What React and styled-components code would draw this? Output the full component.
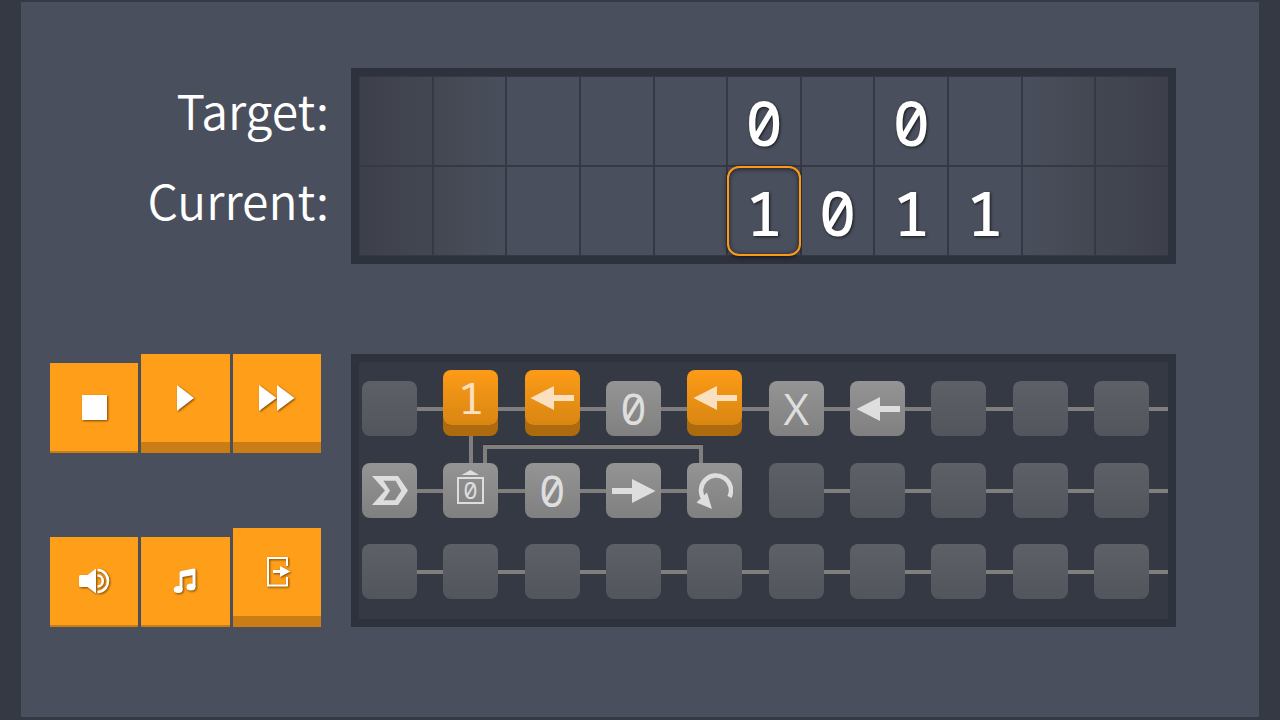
import React from 'react';
import styled, { createGlobalStyle, css } from 'styled-components';

const GlobalStyle = createGlobalStyle`
    * {
        box-sizing: border-box;
    }

    body {
        margin: 0;
        background-color: #353943;
        color: #fff;
    }

    button {
        border: none;
        padding: 0;
        color: inherit;
        cursor: pointer;
    }
`;

const Board = styled.main`
    display: grid;
    grid-template-columns: 301px 1fr;
    grid-template-rows: auto auto;
    align-content: start;
    row-gap: 90px;
    min-height: calc(100vh - 5px);
    margin: 2px 21px 3px;
    padding: 66px 83px 66px 29px;
    background-color: #4a4f5d;
`

const Labels = styled.div`
    display: flex;
    flex-direction: column;
    gap: 2px;
    padding: 9px 22px 9px 0;
`

const Label = styled.div`
    height: 88px;
    font-family: 'Noto Sans CJK JP', 'Noto Sans', sans-serif;
    font-size: 48px;
    font-weight: 350;
    line-height: 65px;
    text-align: right;
`

const Panel = styled.section`
    border: 8px solid #2e323c;
    background-color: #353943;
`

const Tape = styled(Panel)`
    display: flex;
    flex-direction: column;
    gap: 2px;
    padding: 1px 0 1px 1px;
`

const TapeRow = styled.div`
    display: grid;
    grid-template-columns: repeat(11, 1fr);
    gap: 2px;
`

const fades = {
    leftEdge: 'linear-gradient(90deg, #3d404a, #434751)',
    left: 'linear-gradient(90deg, #434751, #4a4f5d)',
    right: 'linear-gradient(90deg, #4a4f5d, #434751)',
    rightEdge: 'linear-gradient(90deg, #434751, #3d404a)'
};

const TapeCell = styled.div`
    position: relative;
    height: 88px;
    background: ${props => fades[props.$fade] || '#4a4f5d'};
    font-family: 'Noto Sans Mono', 'DejaVu Sans Mono', monospace;
    font-size: 62px;
    font-weight: 500;
    line-height: 90px;
    text-align: center;
    text-shadow: 1px 1px 3px rgba(0, 0, 0, 0.7);

    ${props => props.$head && css`
        &::after {
            content: '';
            position: absolute;
            inset: -1px;
            border: 2px solid #fc9a16;
            border-radius: 12px;
            box-shadow: 0 1px 5px rgba(0, 0, 0, 0.6), inset 0 1px 5px rgba(0, 0, 0, 0.6);
        }
    `}
`

const Controls = styled.div`
    display: flex;
    flex-direction: column;
    justify-content: space-between;
    width: 271px;
`

const ButtonRow = styled.div`
    display: grid;
    grid-template-columns: repeat(3, 1fr);
    align-items: end;
    gap: 3px;
`

const ControlButton = styled.button`
    display: flex;
    align-items: center;
    justify-content: center;
    height: ${props => props.$pressed ? '90px' : '99px'};
    border-bottom: ${props => props.$pressed ? '2px' : '11px'} solid #c97d14;
    background-color: #ff9f19;

    svg {
        display: block;
        filter: drop-shadow(1px 1px 1px rgba(90, 50, 0, 0.8));
    }
`

const Program = styled(Panel)`
    padding: 8px 0 20px 3px;
`

const track = css`
    display: grid;
    grid-template-columns: repeat(9, 55px 1fr) 55px 19px;
`

const ProgramRow = styled.div`
    ${track}
    align-items: end;
    margin-top: ${props => props.$spaced ? '26px' : '0'};
`

const Wires = styled.div`
    ${track}
    height: 27px;
`

const Branch = styled.div`
    grid-area: 1 / 3;
    justify-self: center;
    width: 4px;
    background-color: #807f7d;
`

const Loop = styled.div`
    grid-area: 1 / 3 / 2 / 10;
    margin: 9px 39px 0 40px;
    border: 4px solid #807f7d;
    border-bottom: none;
    box-shadow: 0 -1px #2e3038;
`

const Connector = styled.div`
    height: 4px;
    margin-bottom: 25px;
    background-color: ${props => props.$hidden ? 'transparent' : '#807f7d'};
`

const tones = {
    empty: 'linear-gradient(#5d6067, #52555c)',
    grey: 'linear-gradient(#949494, #808080)',
    orange: 'linear-gradient(#fd9b17, #d98612)'
};

const Tile = styled.button`
    display: flex;
    align-items: center;
    justify-content: center;
    height: 55px;
    border-radius: 8px;
    background: ${props => tones[props.$tone]};
    color: #dedede;
    font-family: 'Noto Sans Mono', 'DejaVu Sans Mono', monospace;
    font-size: 44px;
    font-weight: 400;
    line-height: 55px;

    svg {
        display: block;
    }

    ${props => props.$tone === 'orange' && css`
        margin-bottom: 11px;
        box-shadow: 0 11px #ae6b0e;
        color: #fae0c0;
    `}
`

const XMark = styled.span`
    font-family: 'Open Sans', 'Noto Sans', sans-serif;
    font-weight: 400;
`

const StopIcon = () => (
    <svg width="25" height="25" fill="#fff"><path d="M0 0h25v25H0z" /></svg>
);

const PlayIcon = () => (
    <svg width="17" height="26" fill="#fff"><path d="M0 0l17 13L0 26z" /></svg>
);

const ForwardIcon = () => (
    <svg width="36" height="26" fill="#fff"><path d="M0 0l17.500 13L0 26zM18 0l17.500 13-17.500 13z" /></svg>
);

const SoundIcon = () => (
    <svg width="32" height="26" viewBox="-1 0 32 26" fill="none" stroke="#fff" strokeWidth="2.6">
        <path d="M0 8.500q0-1.500 1.500-1.500H8.500L17 .5v25L8.500 19H1.500q-1.500 0-1.500-1.500z" fill="#fff" stroke="none" />
        <path d="M18.500 7.500c7 0 7 11 0 11" />
        <path d="M18.500 2c14 .5 14 21.500 0 22" />
    </svg>
);

const MusicIcon = () => (
    <svg width="24" height="26" viewBox="0 0 24 26" fill="#fff">
        <path d="M6.500 5q0-1.800 1.700-2.100L20.500 .6q2-.2 2 1.400v17h-3V7.200L9.500 9v12.200h-3z" />
        <ellipse cx="5.200" cy="21.500" rx="4.500" ry="3.600" />
        <ellipse cx="18" cy="19" rx="4.500" ry="3.600" />
    </svg>
);

const ExitIcon = () => (
    <svg width="29" height="30" viewBox="-5 0 29 30" fill="none" stroke="#fff" strokeWidth="2">
        <path d="M20 9V1H1v27.500h19v-8.500" />
        <path d="M6 14.500h8" strokeWidth="3" />
        <path d="M13 9l10.500 5.500L13 20z" fill="#fff" stroke="none" />
    </svg>
);

const ArrowIcon = ({ right }) => (
    <svg width="44" height="24" viewBox="0 0 44 24" fill="currentColor">
        <path d={right ? 'M43.500 12L20 0v9H0v6h20v9z' : 'M.5 12L24 0v9h20v6H24v9z'} />
    </svg>
);

const StartIcon = () => (
    <svg width="36" height="29" viewBox="0 0 36 29" fill="currentColor" fillRule="evenodd">
        <path d="M0 0h26l10 14.500L26 29H0l13-14.500zM11.500 4.700l6.500 10-6.500 9.600h11.500l6.300-9.600-5.600-10z" />
    </svg>
);

const ConditionTile = () => (
    <svg width="27" height="41" viewBox="0 0 27 41" fill="currentColor">
        <path d="M4.500 5L13.500 0L22 5z" />
        <path d="M1 8h25v25H1z" fill="none" stroke="currentColor" strokeWidth="2" />
        <text x="13.500" y="29" fontSize="24" textAnchor="middle">0</text>
    </svg>
);

const LoopIcon = () => (
    <svg width="37" height="38" viewBox="0 0 37 38" fill="none">
        <path d="M33.500 25A15 15 0 1 0 8 27.500" stroke="currentColor" strokeWidth="4.500" />
        <path d="M.5 30.500L11 20.500l5 16.500z" fill="currentColor" />
    </svg>
);

const target = { 5: '0', 7: '0' };
const current = { 5: '1', 6: '0', 7: '1', 8: '1' };
const fadeOf = { 0: 'leftEdge', 1: 'left', 9: 'right', 10: 'rightEdge' };

const columns = [...Array(11).keys()];

const rows = [
    [
        null,
        { name: 'Write 1', tone: 'orange', icon: '1' },
        { name: 'Move left', tone: 'orange', icon: <ArrowIcon /> },
        { name: 'Write 0', tone: 'grey', icon: '0' },
        { name: 'Move left', tone: 'orange', icon: <ArrowIcon /> },
        { name: 'Erase', tone: 'grey', icon: <XMark>X</XMark> },
        { name: 'Move left', tone: 'grey', icon: <ArrowIcon /> },
        null, null, null
    ],
    [
        { name: 'Start', tone: 'grey', icon: <StartIcon /> },
        { name: 'If 0', tone: 'grey', icon: <ConditionTile /> },
        { name: 'Write 0', tone: 'grey', icon: '0' },
        { name: 'Move right', tone: 'grey', icon: <ArrowIcon right /> },
        { name: 'Loop', tone: 'grey', icon: <LoopIcon />, end: true },
        null, null, null, null, null
    ],
    Array(10).fill(null)
];

function ProgramTiles({ tiles, spaced }) {
    return (
        <ProgramRow $spaced={spaced}>
            {tiles.map((tile, i) => (
                <React.Fragment key={i}>
                    <Tile $tone={tile ? tile.tone : 'empty'} aria-label={tile ? tile.name : 'Empty'}>
                        {tile && tile.icon}
                    </Tile>
                    <Connector $hidden={tile && tile.end} />
                </React.Fragment>
            ))}
        </ProgramRow>
    );
}

function App() {
    return (
        <>
            <GlobalStyle />
            <Board>
                <Labels>
                    <Label>Target:</Label>
                    <Label>Current:</Label>
                </Labels>
                <Tape>
                    <TapeRow>
                        {columns.map(i => <TapeCell key={i} $fade={fadeOf[i]}>{target[i]}</TapeCell>)}
                    </TapeRow>
                    <TapeRow>
                        {columns.map(i => <TapeCell key={i} $fade={fadeOf[i]} $head={i === 5}>{current[i]}</TapeCell>)}
                    </TapeRow>
                </Tape>
                <Controls>
                    <ButtonRow>
                        <ControlButton $pressed aria-label="Stop"><StopIcon /></ControlButton>
                        <ControlButton aria-label="Play"><PlayIcon /></ControlButton>
                        <ControlButton aria-label="Fast forward"><ForwardIcon /></ControlButton>
                    </ButtonRow>
                    <ButtonRow>
                        <ControlButton $pressed aria-label="Sound"><SoundIcon /></ControlButton>
                        <ControlButton $pressed aria-label="Music"><MusicIcon /></ControlButton>
                        <ControlButton aria-label="Exit"><ExitIcon /></ControlButton>
                    </ButtonRow>
                </Controls>
                <Program>
                    <ProgramTiles tiles={rows[0]} />
                    <Wires>
                        <Branch />
                        <Loop />
                    </Wires>
                    <ProgramTiles tiles={rows[1]} />
                    <ProgramTiles tiles={rows[2]} spaced />
                </Program>
            </Board>
        </>
    );
}

export default App;
